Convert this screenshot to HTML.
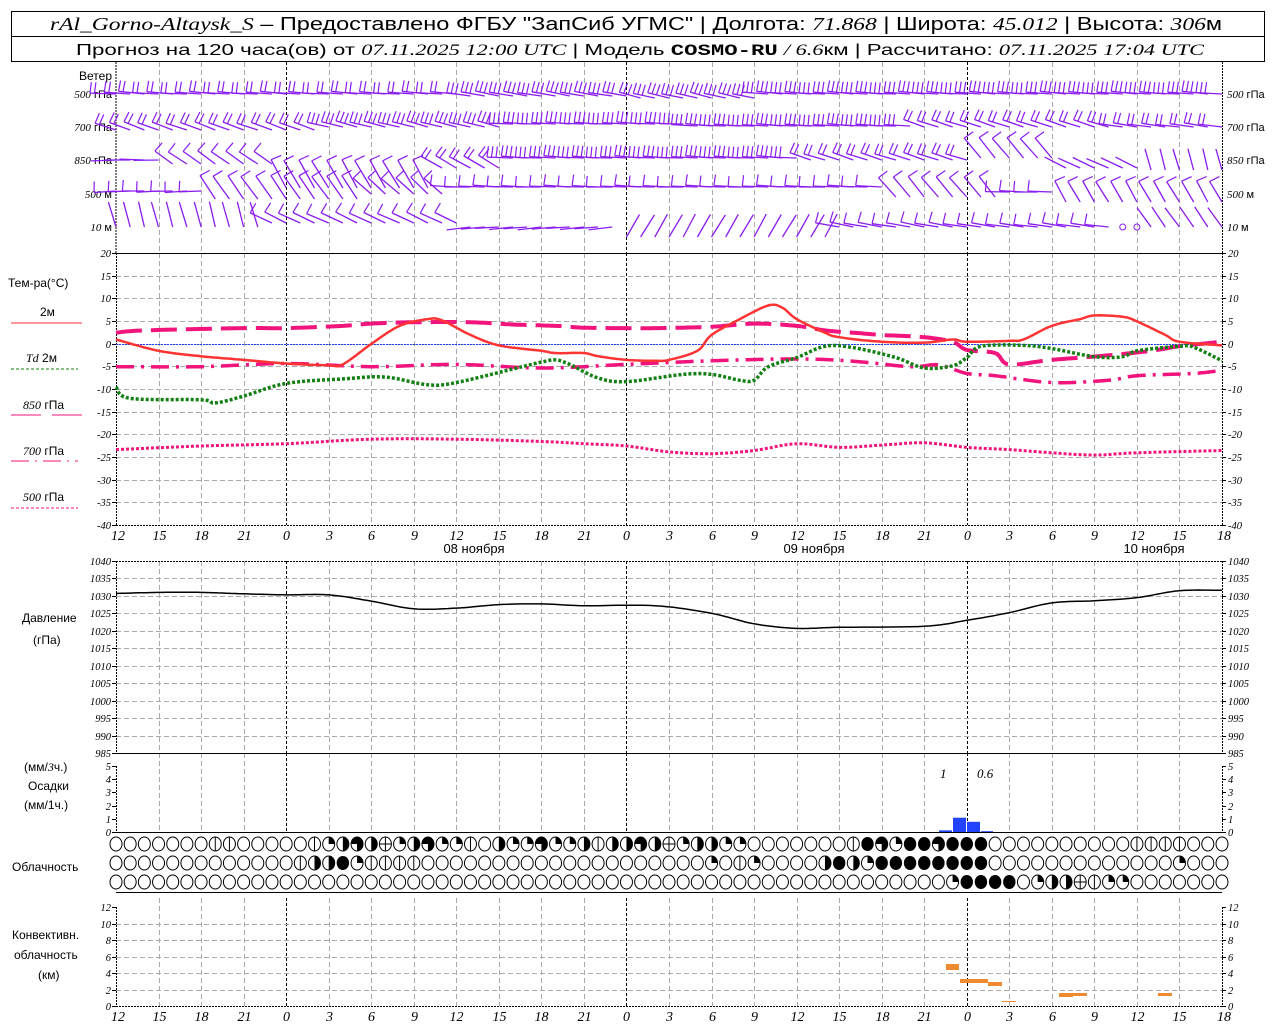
<!DOCTYPE html>
<html><head><meta charset="utf-8"><style>
html,body{margin:0;padding:0;background:#fff;width:1280px;height:1024px;overflow:hidden}
svg{display:block;font-family:"Liberation Sans","DejaVu Sans",sans-serif}
.it{font-family:"Liberation Serif",serif;font-style:italic}
</style></head><body>
<svg id="s" width="1280" height="1024" viewBox="0 0 1280 1024" xmlns="http://www.w3.org/2000/svg">
<rect x="11.5" y="11.5" width="1253" height="50" fill="none" stroke="#000"/>
<line x1="11" y1="36.5" x2="1264" y2="36.5" stroke="#000"/>
<text x="50" y="30" font-size="18" textLength="1172" lengthAdjust="spacingAndGlyphs"><tspan class="it">rAl_Gorno-Altaysk_S</tspan> – Предоставлено ФГБУ "ЗапСиб УГМС" | Долгота: <tspan class="it">71.868</tspan> | Широта: <tspan class="it">45.012</tspan> | Высота: <tspan class="it">306</tspan>м</text>
<text x="76" y="55" font-size="16" textLength="1128" lengthAdjust="spacingAndGlyphs">Прогноз на 120 часа(ов) от <tspan class="it">07.11.2025 12:00 UTC</tspan>  | Модель <tspan font-weight="bold" font-family="Liberation Mono">COSMO-RU</tspan> <tspan class="it">/ 6.6</tspan>км | Рассчитано: <tspan class="it">07.11.2025 17:04 UTC</tspan></text>
<g font-size="11">
<text x="112" y="80" text-anchor="end" font-size="12">Ветер</text>
<text x="112" y="98" text-anchor="end"><tspan class="it">500</tspan> гПа</text>
<text x="112" y="131" text-anchor="end"><tspan class="it">700</tspan> гПа</text>
<text x="112" y="164" text-anchor="end"><tspan class="it">850</tspan> гПа</text>
<text x="112" y="198" text-anchor="end"><tspan class="it">500</tspan> м</text>
<text x="112" y="231" text-anchor="end"><tspan class="it">10</tspan>   м</text>
<text x="1227" y="98"><tspan class="it">500</tspan> гПа</text>
<text x="1227" y="131"><tspan class="it">700</tspan> гПа</text>
<text x="1227" y="164"><tspan class="it">850</tspan> гПа</text>
<text x="1227" y="198"><tspan class="it">500</tspan> м</text>
<text x="1227" y="231"><tspan class="it">10</tspan>   м</text>
<text x="8" y="287" font-size="12">Тем-ра(°C)</text>
<text x="40" y="316" font-size="12">2м</text>
<line x1="11" y1="323" x2="82" y2="323" stroke="#f33"/>
<text x="26" y="362" font-size="12"><tspan class="it">Td</tspan>  2м</text>
<line x1="11" y1="369" x2="78" y2="369" stroke="#128012" stroke-dasharray="3,2"/>
<text x="23" y="409" font-size="12"><tspan class="it">850</tspan> гПа</text>
<line x1="11" y1="415" x2="82" y2="415" stroke="#f0147c" stroke-dasharray="30,11"/>
<text x="23" y="455" font-size="12"><tspan class="it">700</tspan> гПа</text>
<line x1="11" y1="461" x2="78" y2="461" stroke="#f0147c" stroke-dasharray="18,6,2,6"/>
<text x="23" y="501" font-size="12"><tspan class="it">500</tspan> гПа</text>
<line x1="11" y1="508" x2="78" y2="508" stroke="#f0147c" stroke-dasharray="3,2"/>
<text x="22" y="622" font-size="12">Давление</text>
<text x="33" y="644" font-size="12">(гПа)</text>
<text x="24" y="771" font-size="12">(мм/<tspan class="it">3</tspan>ч.)</text>
<text x="28" y="790" font-size="12">Осадки</text>
<text x="24" y="809" font-size="12">(мм/1ч.)</text>
<text x="12" y="871" font-size="12">Облачность</text>
<text x="12" y="939" font-size="12">Конвективн.</text>
<text x="14" y="959" font-size="12">облачность</text>
<text x="38" y="979" font-size="12">(км)</text>
<text x="940" y="778" class="it" font-size="13">1</text>
<text x="977" y="778" class="it" font-size="13">0.6</text>
</g>
<g id="g"></g>
</svg>
<script>
var S=document.getElementById('g'),NS='http://www.w3.org/2000/svg';
function el(t,a,txt){var e=document.createElementNS(NS,t);for(var k in a)e.setAttribute(k,a[k]);if(txt!=null)e.textContent=txt;S.appendChild(e);return e;}
var X0=116,X1=1222,PH=(X1-X0)/78;function hx(h){return X0+PH*h;}
var hrs=['12','15','18','21','0','3','6','9','12','15','18','21','0','3','6','9','12','15','18','21','0','3','6','9','12','15','18'];
var panels=[[62,253],[253,525],[561,753],[753,832],[898,1006]];
for(var i=0;i<27;i++){var x=Math.round(hx(i*3))+.5;var zero=hrs[i]=='0';
 if(i==0||i==26)continue;
 panels.forEach(function(p){el('line',{x1:x,y1:p[0],x2:x,y2:p[1],stroke:zero?'#000':'#aaa','stroke-dasharray':zero?'3,2':'5,3','stroke-width':1});});
 el('text',{x:x,y:540,'font-size':14,'text-anchor':'middle','class':'it'},hrs[i]);
 el('text',{x:x,y:1021,'font-size':14,'text-anchor':'middle','class':'it'},hrs[i]);}
[[0,'12'],[26,'18']].forEach(function(a){var x=hx(a[0]*3);el('text',{x:x+2,y:540,'font-size':14,'text-anchor':'middle','class':'it'},a[1]);el('text',{x:x+2,y:1021,'font-size':14,'text-anchor':'middle','class':'it'},a[1]);});
el('text',{x:474,y:553,'font-size':13,'text-anchor':'middle'},'08 ноября');
el('text',{x:814,y:553,'font-size':13,'text-anchor':'middle'},'09 ноября');
el('text',{x:1154,y:553,'font-size':13,'text-anchor':'middle'},'10 ноября');
function axis(y0,y1,v0,v1,step,fmtR,grid){var n=Math.round((v0-v1)/step);for(var k=0;k<=n;k++){var v=v0-k*step,y=y0+(y1-y0)*k/n;y=Math.round(y)+.5;
 if(grid&&k>0&&k<n)el('line',{x1:X0,y1:y,x2:X1,y2:y,stroke:'#aaa','stroke-dasharray':'5,3'});
 el('line',{x1:X0-4,y1:y,x2:X0,y2:y,stroke:'#000'});el('line',{x1:X1,y1:y,x2:X1+4,y2:y,stroke:'#000'});
 el('text',{x:X0-5,y:y+3.5,'font-size':10.5,'text-anchor':'end','class':'it'},String(v));
 if(fmtR)el('text',{x:X1+6,y:y+3.5,'font-size':10.5,'class':'it'},String(v));}
 el('line',{x1:X0+.5,y1:y0,x2:X0+.5,y2:y1,stroke:'#000','stroke-dasharray':'2,1'});el('line',{x1:X1+.5,y1:y0,x2:X1+.5,y2:y1,stroke:'#000','stroke-dasharray':'2,1'});}
axis(253,525,20,-40,5,true,true);
axis(561,753,1040,985,5,true,true);
axis(766,832,5,0,1,true,false);
axis(907,1006,12,0,2,true,true);
el('line',{x1:X0,y1:62,x2:X0,y2:253,stroke:'#000','stroke-dasharray':'2,1'});el('line',{x1:X1+.5,y1:62,x2:X1+.5,y2:253,stroke:'#000','stroke-dasharray':'2,1'});
el('line',{x1:X0,y1:253.5,x2:X1,y2:253.5,stroke:'#000'});
el('line',{x1:X0,y1:525.5,x2:X1,y2:525.5,stroke:'#000','stroke-dasharray':'2,1'});
el('line',{x1:X0,y1:561.5,x2:X1,y2:561.5,stroke:'#000','stroke-dasharray':'2,1'});
el('line',{x1:X0,y1:753.5,x2:X1,y2:753.5,stroke:'#000'});
el('line',{x1:X0,y1:832.5,x2:X1,y2:832.5,stroke:'#000'});
el('line',{x1:X0,y1:892.5,x2:X1,y2:892.5,stroke:'#000'});
el('line',{x1:X0,y1:1006.5,x2:X1,y2:1006.5,stroke:'#000','stroke-dasharray':'2,1'});
el('line',{x1:X0,y1:344.5,x2:X1,y2:344.5,stroke:'#2040ff','stroke-dasharray':'2,1'});
function cr(pts){var out=[];for(var i=0;i<pts.length-1;i++){var p0=pts[Math.max(0,i-1)],p1=pts[i],p2=pts[i+1],p3=pts[Math.min(pts.length-1,i+2)];
 for(var t=0;t<1;t+=0.1){var t2=t*t,t3=t2*t;function f(a,b,c,d){return 0.5*((2*b)+(-a+c)*t+(2*a-5*b+4*c-d)*t2+(-a+3*b-3*c+d)*t3);}
 out.push([f(p0[0],p1[0],p2[0],p3[0]),f(p0[1],p1[1],p2[1],p3[1])]);}}out.push(pts[pts.length-1]);return out;}
function curve(data,ymap,attrs){var p=cr(data).map(function(q){return hx(q[0]).toFixed(1)+','+ymap(q[1]).toFixed(1);});attrs.points=p.join(' ');attrs.fill='none';el('polyline',attrs);}
function ty(v){return 344-v*4.533;}function py(v){return 561+(1040-v)*3.49;}
curve([[0,-23.3],[6,-22.5],[12,-22],[18,-21],[24,-21],[30,-21.5],[33,-22],[36,-22.5],[39,-23.8],[42,-24.2],[45,-23.5],[48,-22],[51,-22.8],[54,-22.3],[57,-21.8],[60,-22.8],[63,-23.3],[66,-24],[69,-24.5],[72,-24],[78,-23.5]],ty,{stroke:'#f0147c','stroke-width':3,'stroke-dasharray':'3,2'});
curve([[0,-5],[6,-5],[12,-4.3],[18,-5],[24,-4.5],[30,-5.3],[36,-4.5],[42,-3.7],[48,-3.3],[52,-3.8],[56,-5],[58,-4.6],[60,-6.5],[62,-7],[66,-8.5],[70,-8],[72,-7],[76,-6.5],[78,-5.8]],ty,{stroke:'#f0147c','stroke-width':3.5,'stroke-dasharray':'18,7,3,7'});
curve([[0,2.5],[2,3],[9,3.5],[12,3.5],[16,4],[18,4.5],[21,4.8],[25,4.8],[28,4.3],[31,4],[33,3.6],[36,3.5],[38,3.5],[42,3.8],[45,4.5],[48,4],[50,3],[52,2.5],[54,2],[57,1.5],[59,0.5],[60,-1.3],[62,-2],[63,-4.5],[66,-3.5],[70,-2.5],[73,-1.5],[75,-0.5],[78,0.5]],ty,{stroke:'#f0147c','stroke-width':4,'stroke-dasharray':'26,9'});
curve([[0,-9.5],[1,-12],[6,-12.3],[7,-13],[9,-11.5],[12,-8.7],[16,-7.7],[19,-7.3],[22,-9],[24,-8.5],[28,-5.5],[30,-4],[31,-3.5],[32,-4.5],[34,-7.5],[36,-8.3],[40,-6.7],[42,-6.7],[44,-8],[45,-8],[46,-5],[48,-3],[50,-0.5],[52,-0.8],[55,-3],[57,-5.3],[59,-4.8],[60,-3],[61,-0.5],[64,-0.3],[66,-1],[69,-2.8],[71,-2.8],[72,-1.5],[75,-0.5],[76,-0.7],[78,-3.7]],ty,{stroke:'#128012','stroke-width':3.5,'stroke-dasharray':'3,2'});
curve([[0,1],[3,-1.5],[6,-2.7],[9,-3.5],[12,-4.3],[15,-4.7],[16,-4.5],[18,0],[20,4],[22,5.5],[23,5.2],[25,2],[27,-0.3],[30,-1.5],[31,-2],[33,-2],[34,-2.7],[36,-3.5],[38,-3.7],[39,-3.5],[41,-1.5],[42,2],[44,5.5],[46,8.5],[47,8],[48,5.5],[50,2.5],[51,1.5],[54,0.5],[57,0.3],[59,1],[60,0.5],[63,0.7],[64,1],[66,4],[68,5.5],[69,6.3],[71,6],[72,5],[74,2],[75,0.5],[78,-0.3]],ty,{stroke:'#f33','stroke-width':2.5});
curve([[0,1030.7],[3,1031],[6,1031],[9,1030.6],[12,1030.3],[15,1030.3],[18,1028.5],[21,1026.3],[24,1026.5],[27,1027.5],[30,1027.7],[33,1027.2],[38,1027.2],[42,1025],[45,1022],[48,1020.7],[51,1021],[57,1021.3],[60,1023],[63,1025.2],[66,1028],[69,1028.6],[72,1029.5],[75,1031.5],[78,1031.6]],py,{stroke:'#000','stroke-width':1.5});
[[939,952,0.12],[953,966,1.05],[967,980,0.75],[981,993,0.06]].forEach(function(b){var h=b[2]*13.6;el('rect',{x:b[0],y:832-h,width:b[1]-b[0],height:h,fill:'#2244ff'});});
[[946,959,964,970],[960,988,979,983],[988,1002,982,986],[1002,1016,1001,1002],[1059,1073,993,997],[1073,1087,993,996],[1158,1172,993,996]].forEach(function(b){el('rect',{x:b[0],y:b[2],width:b[1]-b[0],height:b[3]-b[2],fill:'#f08a30'});});
function rowTypes(spec){var a=[];for(var i=0;i<79;i++)a.push('o');spec.forEach(function(s){for(var i=s[0];i<=s[1];i++)a[i]=s[2].length>1?s[2][(i-s[0])%s[2].length]:s[2];});return a;}
var rows=[[844,rowTypes([[7,8,'v'],[14,14,'v'],[15,44,'qhtheqhtqqvohqqtqqhvhhtheqhhqq'],[45,51,'o'],[52,52,'v'],[53,61,'ftqfftfff'],[72,75,'v']])],
[863,rowTypes([[13,13,'v'],[14,15,'h'],[16,16,'f'],[17,17,'q'],[18,21,'v'],[42,42,'q'],[44,44,'v'],[45,45,'q'],[50,50,'h'],[51,51,'f'],[52,52,'h'],[53,53,'q'],[54,61,'f'],[75,75,'q']])],
[882,rowTypes([[59,59,'q'],[60,63,'f'],[65,65,'q'],[66,67,'h'],[68,68,'e'],[69,69,'v'],[70,71,'q']])]];
rows.forEach(function(r){var cy=r[0];r[1].forEach(function(t,i){var cx=hx(i);
 if(t=='f'){el('ellipse',{cx:cx,cy:cy,rx:6.2,ry:7,fill:'#000'});return;}
 el('ellipse',{cx:cx,cy:cy,rx:6,ry:7,fill:'#fff',stroke:'#000','stroke-width':1});
 if(t=='v'||t=='e')el('line',{x1:cx,y1:cy-7,x2:cx,y2:cy+7,stroke:'#000'});
 if(t=='e')el('line',{x1:cx-6,y1:cy,x2:cx+6,y2:cy,stroke:'#000'});
 if(t=='q')el('path',{d:'M'+cx+','+cy+' L'+cx+','+(cy-7)+' A6,7 0 0 1 '+(cx+6)+','+cy+' Z',fill:'#000'});
 if(t=='h')el('path',{d:'M'+cx+','+(cy-7)+' A6,7 0 0 1 '+cx+','+(cy+7)+' Z',fill:'#000'});
 if(t=='t')el('path',{d:'M'+cx+','+cy+' L'+(cx-6)+','+cy+' A6,7 0 1 1 '+cx+','+(cy+7)+' Z',fill:'#000'});
});});
var WC='#8a1cf0';
function seg(list,h){for(var i=0;i<list.length;i++)if(h>=list[i][0]&&h<=list[i][1])return list[i];return list[list.length-1];}
// [h0,h1,angle,len,feathers,dy]
var levels=[
 [94,[[0,24,184,26,2,0],[25,36,190,24,3,2],[37,45,193,22,3,4],[46,78,184,26,3,0]]],
 [127,[[0,14,200,22,2,3],[15,27,194,22,3,0],[28,40,183,24,3,-3],[41,56,183,26,3,-1],[57,70,198,22,2,0],[71,78,188,24,2,0]]],
 [160,[[0,3,180,25,0,0],[4,11,215,22,1,4],[12,22,240,32,1,28],[23,27,210,24,2,8],[28,48,183,26,3,-2],[49,60,198,22,2,0],[61,66,230,26,1,-2],[67,72,205,24,0,8],[73,78,255,22,0,10]]],
 [194,[[0,6,178,22,1,-3],[7,17,235,28,1,5],[18,23,222,24,1,0],[24,54,182,26,1,-7],[55,62,230,26,1,3],[63,66,182,24,1,-2],[67,78,240,24,1,8]]],
 [227,[[0,10,255,26,0,0],[11,24,205,24,1,-4],[25,35,175,24,0,0],[36,50,300,26,0,10],[51,60,190,24,1,0],[61,70,188,24,1,0],[71,72,0,0,-1,0],[73,78,235,24,0,0]]]];
levels.forEach(function(L){var y0=L[0];for(var h=0;h<=78;h++){var s=seg(L[1],h);var x=hx(h),y=y0+s[5];
 if(s[4]<0){el('circle',{cx:x,cy:y0,r:3,fill:'none',stroke:WC});continue;}
 var a=(s[2]+((h*37)%5-2))*Math.PI/180,len=s[3];var ex=x+Math.cos(a)*len,ey=y+Math.sin(a)*len;
 el('line',{x1:x.toFixed(1),y1:y.toFixed(1),x2:ex.toFixed(1),y2:ey.toFixed(1),stroke:WC,'stroke-width':1.3});
 var fa=a+95*Math.PI/180;for(var k=0;k<s[4];k++){var bx=ex-Math.cos(a)*k*4.5,by=ey-Math.sin(a)*k*4.5;
 el('line',{x1:bx.toFixed(1),y1:by.toFixed(1),x2:(bx+Math.cos(fa)*11).toFixed(1),y2:(by+Math.sin(fa)*11).toFixed(1),stroke:WC,'stroke-width':1.2});}}});
</script>
</body></html>
